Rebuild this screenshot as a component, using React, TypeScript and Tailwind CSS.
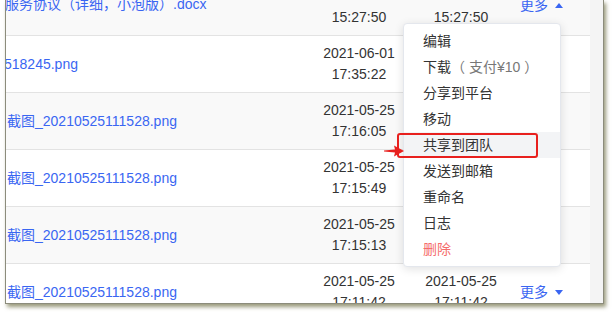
import React from "react";

const FONT = { fontFamily: '"Liberation Sans", Arial, "Noto Sans CJK SC", sans-serif' };

type Row = { name: string; shift: number; d1: string[]; d2: string[]; more: "up" | "down" | null };

const rows: Row[] = [
  { name: "服务协议（详细，小泡版）.docx", shift: -1, d1: ["", "15:27:50"], d2: ["", "15:27:50"], more: "up" },
  { name: "518245.png", shift: -2, d1: ["2021-06-01", "17:35:22"], d2: ["", ""], more: null },
  { name: "截图_20210525111528.png", shift: 1, d1: ["2021-05-25", "17:16:05"], d2: ["", ""], more: null },
  { name: "截图_20210525111528.png", shift: 1, d1: ["2021-05-25", "17:15:49"], d2: ["", ""], more: null },
  { name: "截图_20210525111528.png", shift: 1, d1: ["2021-05-25", "17:15:13"], d2: ["", ""], more: null },
  { name: "截图_20210525111528.png", shift: 1, d1: ["2021-05-25", "17:11:42"], d2: ["2021-05-25", "17:11:42"], more: "down" },
];

function Tri({ up }: { up: boolean }) {
  return (
    <svg width="8" height="5" viewBox="0 0 8 5" className="ml-[7px]">
      {up ? <polygon points="0,5 8,5 4,0" fill="#3a66f2" /> : <polygon points="0,0 8,0 4,5" fill="#3a66f2" />}
    </svg>
  );
}

const items = ["编辑", "下载", "分享到平台", "移动", "共享到团队", "发送到邮箱", "重命名", "日志", "删除"];

export default function App() {
  return (
    <div className="w-[612px] h-[312px] bg-white overflow-hidden" style={FONT}>
      <div className="ml-[5px] w-[599px] h-[304px] border-l border-r border-b border-[#8c8c7c] shadow-[2px_3px_4px_rgba(120,120,80,0.75)] relative overflow-hidden flex bg-white">
        <div className="w-[584px] shrink-0">
          <div className="-mt-[21px]">
            {rows.map((r, i) => (
              <div
                key={i}
                className={`h-[57px] grid grid-cols-[302px_102px_102px_78px] items-center border-b border-[#e3e3e3] ${
                  i % 2 === 0 ? "bg-[#f9f9f9]" : "bg-white"
                }`}
              >
                <div className={`overflow-hidden whitespace-nowrap text-[14px] text-[#3a66f2] ${i === 0 ? "-mt-[5px]" : ""}`}>
                  <span className="inline-block" style={{ marginLeft: r.shift }}>{r.name}</span>
                </div>
                <div className="text-center text-[14px] leading-[21px] text-[#333]">
                  <div>{r.d1[0] || "\u00a0"}</div>
                  <div>{r.d1[1] || "\u00a0"}</div>
                </div>
                <div className="text-center text-[14px] leading-[21px] text-[#333]">
                  <div>{r.d2[0] || "\u00a0"}</div>
                  <div>{r.d2[1] || "\u00a0"}</div>
                </div>
                <div className={`pl-[8px] flex items-center text-[14px] text-[#3a66f2] ${i === 0 ? "-mt-[4px]" : ""}`}>
                  {r.more && (
                    <>
                      <span>更多</span>
                      <Tri up={r.more === "up"} />
                    </>
                  )}
                </div>
              </div>
            ))}
          </div>
        </div>
        <div className="flex-1 bg-[#f4f4f4]" />

        <div className="absolute left-[397px] top-[23px] w-[158px] h-[244px] bg-white border border-[#e4e7ed] rounded-[4px] shadow-[0_2px_10px_rgba(0,0,0,0.12)] py-[4px]">
          {items.map((t, i) => (
            <div
              key={t}
              className={`h-[26px] flex items-center pl-[19px] text-[14px] ${
                i === 4 ? "bg-[#f3f4f6]" : ""
              } ${i === 8 ? "text-[#f56c6c]" : "text-[#333]"}`}
            >
              {t}
              {i === 1 && <span className="text-[#777]">（ 支付¥10 ）</span>}
            </div>
          ))}
        </div>

        <div className="absolute left-[391px] top-[133px] w-[141px] h-[25px] border-2 border-[#e8201e] rounded-[3px]" />
        <svg className="absolute left-[378px] top-[144px]" width="22" height="14" viewBox="0 0 22 14">
          <polygon points="0,6.6 11,5.6 10,1.5 20,7 10,12.5 11,8.4 0,7.4" fill="#e8201e" />
        </svg>
      </div>
    </div>
  );
}
